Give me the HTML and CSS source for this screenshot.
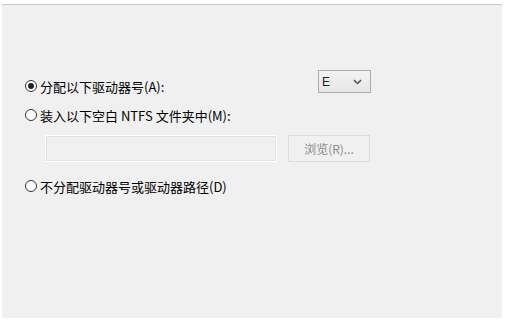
FILE: index.html
```html
<!DOCTYPE html>
<html lang="zh">
<head>
<meta charset="utf-8">
<link rel="stylesheet" href="styles.css">
</head>
<body>
<div class="panel">
  <div class="row row1">
    <label class="opt opt1"><span class="radio checked"></span><span>分配以下驱动器号(A):</span></label>
    <div class="select"><span class="val">E</span>
      <svg class="chev" width="9" height="6" viewBox="0 0 9 6"><path d="M1 1.2 L4.5 4.5 L8 1.2" fill="none" stroke="#555" stroke-width="1.6"/></svg>
    </div>
  </div>
  <div class="row row2">
    <label class="opt"><span class="radio"></span><span>装入以下空白 NTFS 文件夹中(M):</span></label>
  </div>
  <div class="row row3">
    <div class="textbox"></div>
    <div class="button">浏览(R)...</div>
  </div>
  <div class="row row4">
    <label class="opt"><span class="radio"></span><span>不分配驱动器号或驱动器路径(D)</span></label>
  </div>
</div>
</body>
</html>
```
FILE: styles.css
```css
html, body {
  margin: 0;
  padding: 0;
  background: #ffffff;
  width: 509px;
  height: 322px;
  overflow: hidden;
}
body {
  padding: 4px 7px 0 2px;
  box-sizing: border-box;
  font-family: "Microsoft YaHei", "Noto Sans CJK SC", "Noto Sans", sans-serif;
  font-size: 13px;
  color: #000;
}
.panel {
  width: 500px;
  height: 314px;
  background: #f0f0f0;
  border-top: 1px solid #c9c9c9;
  box-sizing: border-box;
  display: flex;
  flex-direction: column;
  padding-left: 23px;
}
.row {
  display: flex;
  align-items: center;
}
.row1 {
  margin-top: 65px;
  height: 23px;
  align-items: flex-start;
}
.opt1 {
  margin-top: 8px;
}
.row2 {
  margin-top: 14px;
  height: 16px;
}
.row3 {
  margin-top: 12px;
  height: 27px;
  padding-left: 20px;
}
.row4 {
  margin-top: 16px;
  height: 16px;
}
.opt {
  display: flex;
  align-items: center;
  gap: 3px;
  height: 16px;
  white-space: nowrap;
}
.radio {
  width: 12px;
  height: 12px;
  border: 1px solid #333;
  border-radius: 50%;
  background: #fff;
  box-sizing: border-box;
  position: relative;
  flex: none;
}
.radio.checked::after {
  content: "";
  position: absolute;
  left: 2px;
  top: 2px;
  width: 6px;
  height: 6px;
  border-radius: 50%;
  background: #222;
}
.select {
  margin-left: auto;
  margin-right: 131px;
  width: 53px;
  height: 23px;
  box-sizing: border-box;
  border: 1px solid #acacac;
  background: linear-gradient(#f2f2f2, #e6e6e6);
  display: flex;
  align-items: center;
  justify-content: space-between;
  padding: 0 8px 0 3px;
  font-family: "Liberation Sans", Arial, sans-serif;
  font-size: 12px;
  color: #222;
}
.textbox {
  width: 232px;
  height: 27px;
  box-sizing: border-box;
  border: 1px solid #ffffff;
  outline: 1px solid #e2e2e2;
  outline-offset: -2px;
  background: #f0f0f0;
}
.button {
  margin-left: 11px;
  width: 82px;
  height: 27px;
  box-sizing: border-box;
  border: 1px solid #dcdcdc;
  background: #f0f0f0;
  color: #8a8a8a;
  display: flex;
  align-items: center;
  justify-content: center;
  font-size: 12px;
}
```
